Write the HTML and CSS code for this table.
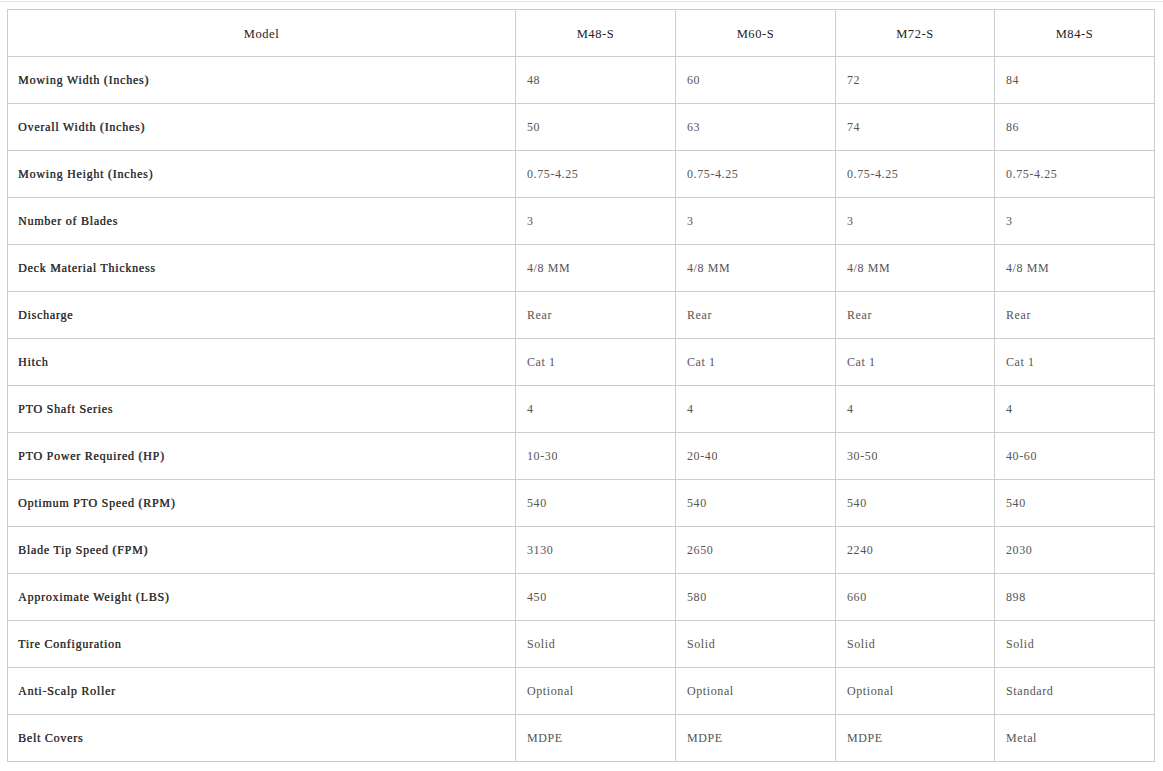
FILE: index.html
```html
<!DOCTYPE html>
<html>
<head>
<meta charset="utf-8">
<link rel="stylesheet" href="styles.css">
</head>
<body>
<div class="topline"></div>
<table class="spec">
<colgroup><col class="c0"><col class="c1"><col class="c1"><col class="c2"><col class="c1"></colgroup>
<thead>
<tr><th>Model</th><th>M48-S</th><th>M60-S</th><th>M72-S</th><th>M84-S</th></tr>
</thead>
<tbody>
<tr><td class="lab">Mowing Width (Inches)</td><td>48</td><td>60</td><td>72</td><td>84</td></tr>
<tr><td class="lab">Overall Width (Inches)</td><td>50</td><td>63</td><td>74</td><td>86</td></tr>
<tr><td class="lab">Mowing Height (Inches)</td><td>0.75-4.25</td><td>0.75-4.25</td><td>0.75-4.25</td><td>0.75-4.25</td></tr>
<tr><td class="lab">Number of Blades</td><td>3</td><td>3</td><td>3</td><td>3</td></tr>
<tr><td class="lab">Deck Material Thickness</td><td>4/8 MM</td><td>4/8 MM</td><td>4/8 MM</td><td>4/8 MM</td></tr>
<tr><td class="lab">Discharge</td><td>Rear</td><td>Rear</td><td>Rear</td><td>Rear</td></tr>
<tr><td class="lab">Hitch</td><td>Cat 1</td><td>Cat 1</td><td>Cat 1</td><td>Cat 1</td></tr>
<tr><td class="lab">PTO Shaft Series</td><td>4</td><td>4</td><td>4</td><td>4</td></tr>
<tr><td class="lab">PTO Power Required (HP)</td><td>10-30</td><td>20-40</td><td>30-50</td><td>40-60</td></tr>
<tr><td class="lab">Optimum PTO Speed (RPM)</td><td>540</td><td>540</td><td>540</td><td>540</td></tr>
<tr><td class="lab">Blade Tip Speed (FPM)</td><td>3130</td><td>2650</td><td>2240</td><td>2030</td></tr>
<tr><td class="lab">Approximate Weight (LBS)</td><td>450</td><td>580</td><td>660</td><td>898</td></tr>
<tr><td class="lab">Tire Configuration</td><td>Solid</td><td>Solid</td><td>Solid</td><td>Solid</td></tr>
<tr><td class="lab">Anti-Scalp Roller</td><td>Optional</td><td>Optional</td><td>Optional</td><td>Standard</td></tr>
<tr><td class="lab">Belt Covers</td><td>MDPE</td><td>MDPE</td><td>MDPE</td><td>Metal</td></tr>
</tbody>
</table>
</body>
</html>
```
FILE: styles.css
```css
html, body {
  margin: 0;
  padding: 0;
  background: #fff;
}
body {
  font-family: "Liberation Serif", "Times New Roman", serif;
  font-size: 12px;
  color: #444;
}
.topline {
  height: 1px;
  margin-top: 1px;
  background: #e3e3e3;
}
.spec {
  margin: 7px 0 0 7px;
  width: 1147px;
  border-collapse: collapse;
  table-layout: fixed;
}
.c0 { width: 508px; }
.c1 { width: 160px; }
.c2 { width: 159px; }
.spec th, .spec td {
  border: 1px solid #ccc;
  height: 47px;
  padding: 0 11px;
  box-sizing: border-box;
  letter-spacing: 0.6px;
  vertical-align: middle;
}
.spec th {
  font-weight: normal;
  color: #222;
  text-align: center;
  font-size: 12.5px;
  padding-top: 2px;
}
.spec td {
  text-align: left;
  color: #555;
  padding-top: 1px;
}
.spec td.lab {
  font-weight: normal;
  color: #333;
  padding-left: 10px;
  letter-spacing: 0.75px;
  text-shadow: 0.35px 0 0 #333;
}
```
